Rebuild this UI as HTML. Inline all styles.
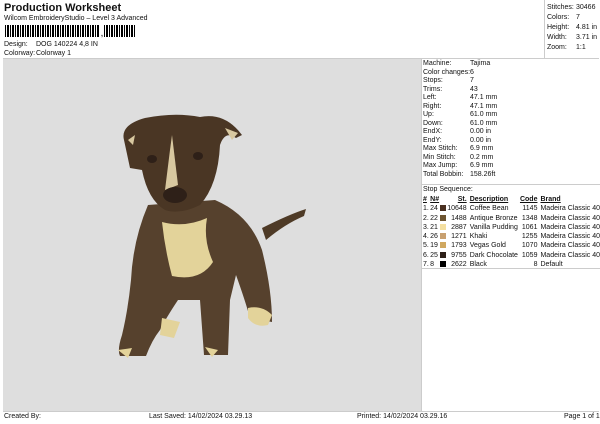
<!DOCTYPE html>
<html><head><style>
body{margin:0;width:600px;height:424px;background:#fff;font-family:"Liberation Sans",sans-serif;color:#111;position:relative;overflow:hidden}
.a{position:absolute;white-space:nowrap;font-size:7px;line-height:8px}
.bc{position:absolute;top:25px;height:12px;background:repeating-linear-gradient(90deg,#000 0 1px,#fff 1px 2px,#000 2px 4px,#fff 4px 5px)}
table{border-collapse:collapse}
td{padding:0;font-size:7px;line-height:9.3px;white-space:nowrap}
.sw{display:inline-block;width:6px;height:6px;vertical-align:-1px}
</style></head><body>
<div class="a" style="left:4px;top:2px;font-size:11px;line-height:13px;font-weight:bold">Production Worksheet</div>
<div class="a" style="left:4px;top:15px">Wilcom EmbroideryStudio – Level 3 Advanced</div>
<div class="bc" style="left:5px;width:95px"></div>
<div class="a" style="left:101px;top:31px;font-weight:bold">,</div>
<div class="bc" style="left:104px;width:32px"></div>
<div class="a" style="left:4px;top:41px">Design:</div><div class="a" style="left:36px;top:41px">DOG 140224 4,8 IN</div>
<div class="a" style="left:4px;top:50px">Colorway:</div><div class="a" style="left:36px;top:50px">Colorway 1</div>
<div style="position:absolute;left:3px;top:58px;width:596px;height:354px;border:1px solid #ccc;border-right:none;box-sizing:border-box"></div>
<div style="position:absolute;left:3px;top:59px;width:418px;height:352px;background:#dedede"></div>
<div style="position:absolute;left:544px;top:0;width:1px;height:58px;background:#ccc"></div>
<div style="position:absolute;left:421px;top:58px;width:1px;height:354px;background:#ccc"></div>
<div style="position:absolute;left:422px;top:184px;width:178px;height:1px;background:#ccc"></div>
<div style="position:absolute;left:422px;top:268px;width:178px;height:1px;background:#ccc"></div>
<div class="a" style="left:547px;top:3px;line-height:10px">Stitches:<br>Colors:<br>Height:<br>Width:<br>Zoom:</div>
<div class="a" style="left:576px;top:3px;line-height:10px">30466<br>7<br>4.81 in<br>3.71 in<br>1:1</div>
<div class="a" style="left:423px;top:60px;line-height:8.5px">Machine:<br>Color changes:<br>Stops:<br>Trims:<br>Left:<br>Right:<br>Up:<br>Down:<br>EndX:<br>EndY:<br>Max Stitch:<br>Min Stitch:<br>Max Jump:<br>Total Bobbin:</div>
<div class="a" style="left:470px;top:60px;line-height:8.5px">Tajima<br>6<br>7<br>43<br>47.1 mm<br>47.1 mm<br>61.0 mm<br>61.0 mm<br>0.00 in<br>0.00 in<br>6.9 mm<br>0.2 mm<br>6.9 mm<br>158.26ft</div>
<div class="a" style="left:423px;top:186px">Stop Sequence:</div>
<table style="position:absolute;left:423px;top:195px">
<tr style="font-weight:bold;text-decoration:underline"><td style="width:8px">#</td><td style="width:10px">N#</td><td style="width:8px"></td><td style="width:20px;text-align:right">St.</td><td style="width:51px;padding-left:3px">Description</td><td style="width:18px;text-align:right">Code</td><td style="padding-left:3px">Brand</td></tr>
<tr><td>1.</td><td>24</td><td><span class="sw" style="background:#4a3020"></span></td><td style="text-align:right">10648</td><td style="padding-left:3px">Coffee Bean</td><td style="text-align:right">1145</td><td style="padding-left:3px">Madeira Classic 40</td></tr>
<tr><td>2.</td><td>22</td><td><span class="sw" style="background:#6e5530"></span></td><td style="text-align:right">1488</td><td style="padding-left:3px">Antique Bronze</td><td style="text-align:right">1348</td><td style="padding-left:3px">Madeira Classic 40</td></tr>
<tr><td>3.</td><td>21</td><td><span class="sw" style="background:#f4dfa0"></span></td><td style="text-align:right">2887</td><td style="padding-left:3px">Vanilla Pudding</td><td style="text-align:right">1061</td><td style="padding-left:3px">Madeira Classic 40</td></tr>
<tr><td>4.</td><td>26</td><td><span class="sw" style="background:#c8a070"></span></td><td style="text-align:right">1271</td><td style="padding-left:3px">Khaki</td><td style="text-align:right">1255</td><td style="padding-left:3px">Madeira Classic 40</td></tr>
<tr><td>5.</td><td>19</td><td><span class="sw" style="background:#d0a860"></span></td><td style="text-align:right">1793</td><td style="padding-left:3px">Vegas Gold</td><td style="text-align:right">1070</td><td style="padding-left:3px">Madeira Classic 40</td></tr>
<tr><td>6.</td><td>25</td><td><span class="sw" style="background:#2e2018"></span></td><td style="text-align:right">9755</td><td style="padding-left:3px">Dark Chocolate</td><td style="text-align:right">1059</td><td style="padding-left:3px">Madeira Classic 40</td></tr>
<tr><td>7.</td><td>8</td><td><span class="sw" style="background:#000"></span></td><td style="text-align:right">2622</td><td style="padding-left:3px">Black</td><td style="text-align:right">8</td><td style="padding-left:3px">Default</td></tr>
</table>
<svg style="position:absolute;left:0;top:0" width="600" height="424">
<path d="M262 228 Q290 214 306 209 L304 216 Q285 224 266 240 Z" fill="#4e3a26"/>
<path d="M148 205 Q133 240 131 280 Q128 310 122 335 Q117 350 120 356 L146 356 Q152 340 160 330 Q166 318 178 300 L200 300 L204 355 L228 355 L230 300 L236 275 Q245 300 250 318 L272 322 Q272 290 262 250 Q250 215 215 200 Z" fill="#56412d"/>
<path d="M162 222 Q185 228 207 218 Q203 240 213 262 Q200 282 172 276 Q165 250 162 222 Z" fill="#e3d39a"/>
<path d="M124 140 Q120 125 145 118 Q175 112 200 117 Q225 112 242 135 L236 138 Q225 130 220 145 Q218 185 200 205 Q180 215 165 210 Q148 200 142 170 L130 168 Z" fill="#4a3624"/>
<path d="M172 135 L178 185 L165 190 L170 150 Z" fill="#d8c8a0"/>
<ellipse cx="175" cy="195" rx="12" ry="8" fill="#2e2018"/>
<ellipse cx="152" cy="159" rx="5" ry="4" fill="#2e2018"/><ellipse cx="198" cy="156" rx="5" ry="4" fill="#2e2018"/>
<path d="M225 128 L238 133 L232 140 Z M128 140 L135 135 L133 145 Z" fill="#d8c8a0"/>
<path d="M248 308 Q262 305 272 315 L268 325 Q255 328 248 318 Z M162 318 L180 322 L174 338 L160 335 Z M118 350 L132 348 L128 358 Z M205 347 L218 350 L212 357 Z" fill="#e3d39a"/>
</svg>
<div class="a" style="left:4px;top:413px">Created By:</div>
<div class="a" style="left:149px;top:413px">Last Saved: 14/02/2024 03.29.13</div>
<div class="a" style="left:357px;top:413px">Printed: 14/02/2024 03.29.16</div>
<div class="a" style="left:564px;top:413px">Page 1 of 1</div>
</body></html>
